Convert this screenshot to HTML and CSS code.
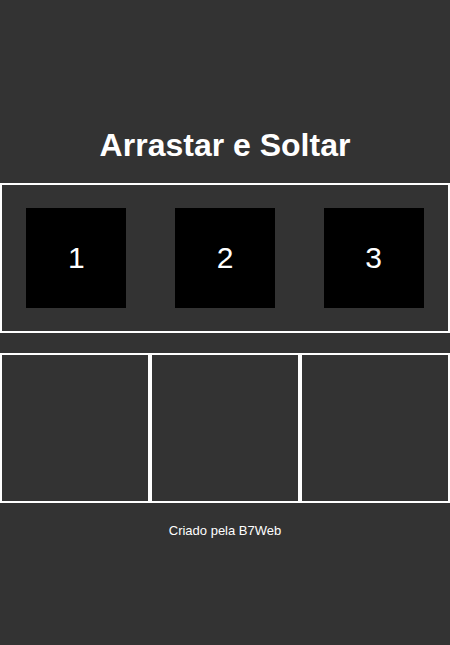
FILE: index.html
```html
<!DOCTYPE html>
<html lang="pt">
<head>
<meta charset="utf-8">
<title>Arrastar e Soltar</title>
<link rel="stylesheet" href="styles.css">
</head>
<body>
  <h1 class="title">Arrastar e Soltar</h1>
  <div class="neutral-area">
    <div class="item">1</div>
    <div class="item">2</div>
    <div class="item">3</div>
  </div>
  <div class="areas">
    <div class="area"></div>
    <div class="area"></div>
    <div class="area"></div>
  </div>
  <footer class="footer">Criado pela B7Web</footer>
</body>
</html>
```
FILE: styles.css
```css
html, body {
  margin: 0;
  padding: 0;
}
body {
  background-color: #333333;
  color: #ffffff;
  font-family: "Liberation Sans", Arial, sans-serif;
  padding-top: 127px;
  min-height: 645px;
  box-sizing: border-box;
}
.title {
  margin: 0 0 19px 0;
  font-size: 32px;
  line-height: 37px;
  font-weight: bold;
  text-align: center;
}
.neutral-area {
  height: 150px;
  border: 2px solid #ffffff;
  box-sizing: border-box;
  display: flex;
  justify-content: space-around;
  align-items: center;
}
.item {
  width: 100px;
  height: 100px;
  background-color: #000000;
  color: #ffffff;
  font-size: 30px;
  display: flex;
  justify-content: center;
  align-items: center;
}
.areas {
  margin-top: 20px;
  display: flex;
}
.area {
  flex: 1;
  height: 150px;
  border: 2px solid #ffffff;
  box-sizing: border-box;
}
.footer {
  margin-top: 20px;
  font-size: 13px;
  line-height: 15px;
  text-align: center;
}
```
